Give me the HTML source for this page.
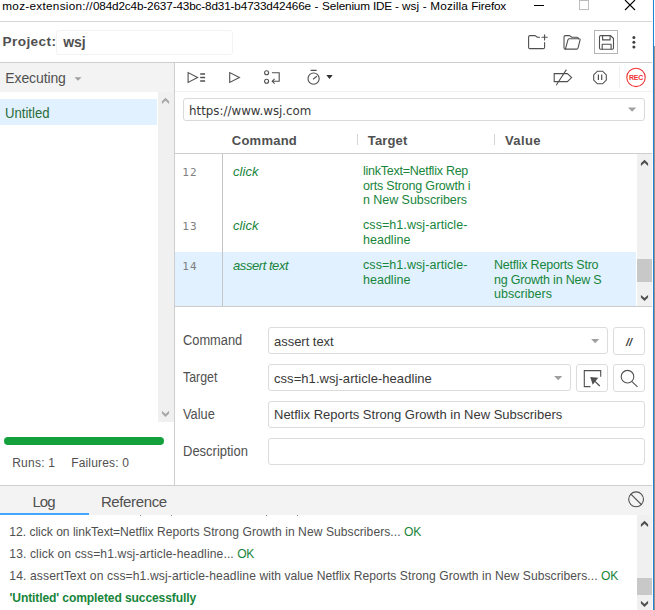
<!DOCTYPE html>
<html lang="en">
<head>
<meta charset="utf-8">
<title>Selenium IDE - wsj</title>
<style>
*{box-sizing:border-box;margin:0;padding:0}
html,body{width:655px;height:610px;overflow:hidden;background:#fff}
body{position:relative;font-family:"Liberation Sans",Arial,sans-serif;color:#505050;font-size:13px}
.a{position:absolute}
.t{position:absolute;white-space:pre}
.box{position:absolute;border:1px solid #dcdcdc;border-radius:3px;background:#fff}
svg.ic{position:absolute;overflow:visible;pointer-events:none}
</style>
</head>
<body>
<div class="t" style="left:2.3px;top:-2px;font-size:11.75px;line-height:16px;color:#000;"><span style="letter-spacing:0.275px">moz-extension://</span><span style="letter-spacing:-0.149px">084d2c4b-2637-43bc-8d31-b4733d42466e</span><span style="letter-spacing:0.216px"> - </span><span style="letter-spacing:-0.15px">Selenium </span><span style="letter-spacing:-0.189px">IDE - </span><span style="letter-spacing:0.163px">wsj - </span><span style="letter-spacing:0.145px">Mozilla </span><span style="letter-spacing:-0.167px">Firefox</span></div>
<svg class="ic" width="655" height="610" viewBox="0 0 655 610" style="left:0;top:0;"><path d="M534 5.5H544" stroke="#000" stroke-width="1" fill="none"/><rect x="579.5" y="0.5" width="9" height="9" stroke="#bcbcbc" stroke-width="1" fill="none"/><path d="M625 0L635 10M635 0L625 10" stroke="#000" stroke-width="1.1" fill="none"/></svg>
<div class="a" style="left:0px;top:21px;width:652px;height:1px;background:#d8d8d8;"></div>
<div class="t" style="left:2.5px;top:34px;font-size:13.6px;line-height:16px;font-weight:bold;letter-spacing:0.414px;">Project:</div>
<div class="box" style="left:56px;top:30px;width:177px;height:25px;border-color:#f3f3f3;"></div>
<div class="t" style="left:63.2px;top:34px;font-size:14px;line-height:16px;font-weight:bold;">wsj</div>
<div class="a" style="left:0px;top:62px;width:652px;height:1px;background:#cecece;"></div>
<svg class="ic" width="655" height="610" viewBox="0 0 655 610" style="left:0;top:0;"><g fill="none" stroke="#505050" stroke-width="1.1" stroke-linejoin="round" stroke-linecap="round"><path d="M539.6 37.3H537.4L535.2 35.6H530Q528.6 35.6 528.6 37V47.2Q528.6 48.6 530 48.6H543.2Q544.6 48.6 544.6 47.2V42.6"/><path d="M542 37.3H547.2M544.6 34.7V39.9"/><path d="M565.4 49.1Q564 49.1 564 47.7V37Q564 35.6 565.4 35.6H569.6L571.8 37.3H577Q578.4 37.3 578.4 38.7"/><path d="M565.4 49.1L568 39.6Q568.3 38.7 569.3 38.7H579Q580.4 38.7 580.1 39.9L578 48.1Q577.7 49.1 576.7 49.1Z"/><path d="M600.7 35.6H610.6L613.5 38.5V48Q613.5 49.2 612.3 49.2H600.7Q599.5 49.2 599.5 48V36.8Q599.5 35.6 600.7 35.6Z"/><path d="M602.6 35.8V39.9H610.1V35.8"/><path d="M602.2 49V44.3H611.1V49"/></g><rect x="594.5" y="30.5" width="23" height="23" fill="none" stroke="#b4b4b4" stroke-width="1"/><circle cx="633.9" cy="37.5" r="1.5" fill="#404040"/><circle cx="633.9" cy="42.2" r="1.5" fill="#404040"/><circle cx="633.9" cy="46.9" r="1.5" fill="#404040"/></svg>
<div class="a" style="left:0px;top:63px;width:174px;height:29px;background:#f3f3f3;"></div>
<div class="t" style="left:5.3px;top:70px;font-size:14px;line-height:16px;letter-spacing:-0.112px;">Executing</div>
<svg class="ic" width="655" height="610" viewBox="0 0 655 610" style="left:0;top:0;"><path d="M74.5 77.3H81.5L78 80.8Z" fill="#a0a0a0"/></svg>
<div class="a" style="left:0px;top:99px;width:157px;height:26px;background:#e1f1ff;"></div>
<div class="t" style="left:5.16px;top:105px;font-size:14px;line-height:16px;transform:scaleX(0.937);transform-origin:0 0;color:#2a6b3a;">Untitled</div>
<div class="a" style="left:158px;top:92px;width:16px;height:330px;background:#f0f0f0;"></div>
<svg class="ic" width="655" height="610" viewBox="0 0 655 610" style="left:0;top:0;"><path d="M165.5 97.8L169.1 101.3V104.0L165.5 100.8L161.9 104.0V101.3Z" fill="#a8a8a8"/><path d="M165.5 417L169.1 413.5V410.8L165.5 414L161.9 410.8V413.5Z" fill="#a8a8a8"/></svg>
<div class="a" style="left:174px;top:63px;width:1px;height:423px;background:#cecece;"></div>
<div class="a" style="left:4px;top:437px;width:160px;height:8px;background:#14a03c;border-radius:4px;"></div>
<div class="t" style="left:12.2px;top:455px;font-size:12px;line-height:16px;letter-spacing:0.25px;">Runs: 1</div>
<div class="t" style="left:71.2px;top:455px;font-size:12px;line-height:16px;letter-spacing:0.17px;">Failures: 0</div>
<div class="a" style="left:175px;top:91px;width:477px;height:1px;background:#f0f0f0;"></div>
<div class="a" style="left:619px;top:66px;width:1px;height:22px;background:#eeeeee;"></div>
<svg class="ic" width="655" height="610" viewBox="0 0 655 610" style="left:0;top:0;"><g fill="none" stroke="#505050" stroke-width="1.1" stroke-linejoin="miter"><path d="M188.1 72.6V82.4L197.6 77.5Z"/><path d="M229.7 72.6V82.4L239.4 77.5Z"/></g><path d="M200.2 74.1H205.1M200.2 77.5H205.1M200.2 80.9H205.1" stroke="#505050" stroke-width="1.5" fill="none"/><g fill="none" stroke="#505050" stroke-width="1.1"><circle cx="266.6" cy="72.7" r="2"/><circle cx="266.6" cy="81.3" r="2"/><path d="M271.9 72.7H279.2V81.3H272.3M274.6 78.9L272.2 81.3L274.6 83.7"/><circle cx="313.6" cy="78.6" r="5.6"/><path d="M310.6 70.4H316.6M313 79.2L316.9 76.3"/><path d="M554.2 73.6H567.4L571.6 77.6L567.4 81.6H554.2ZM566.4 69.6L556.2 85.2"/><path d="M597.4 71.2H602.6L606.3 74.9V80.1L602.6 83.8H597.4L593.7 80.1V74.9Z"/><path d="M598.4 74.6V80M601.7 74.6V80" stroke-width="1.2"/></g><path d="M326.3 74.9H332.7L329.5 79.1Z" fill="#303030"/><circle cx="636" cy="77.4" r="9.2" fill="none" stroke="#f03232" stroke-width="1.1"/></svg>
<div class="t" style="left:628px;top:73px;width:16px;text-align:center;font-size:7px;line-height:10px;font-weight:bold;color:#f03232;letter-spacing:-0.2px">REC</div>
<div class="box" style="left:183px;top:98px;width:462px;height:23px;border-color:#dadada;"></div>
<div class="t" style="left:189.33px;top:103px;font-size:12.2px;line-height:16px;transform:scaleX(0.9718);transform-origin:0 0;color:#383838;font-family:'DejaVu Sans','Liberation Sans',sans-serif;">https://www.wsj.com</div>
<svg class="ic" width="655" height="610" viewBox="0 0 655 610" style="left:0;top:0;"><path d="M628 107.4H636.2L632.1 111.8Z" fill="#a0a0a0"/></svg>
<div class="t" style="left:231.8px;top:133px;font-size:13px;line-height:16px;font-weight:bold;letter-spacing:0.233px;">Command</div>
<div class="t" style="left:367.8px;top:133px;font-size:13px;line-height:16px;font-weight:bold;letter-spacing:0.14px;">Target</div>
<div class="t" style="left:505px;top:133px;font-size:13px;line-height:16px;font-weight:bold;letter-spacing:0.4px;">Value</div>
<div class="a" style="left:357px;top:134px;width:1px;height:11px;background:#d4d4d4;"></div>
<div class="a" style="left:494px;top:134px;width:1px;height:11px;background:#d4d4d4;"></div>
<div class="a" style="left:175px;top:153px;width:477px;height:1px;background:#cecece;"></div>
<div class="a" style="left:175px;top:252px;width:461px;height:54px;background:#e1f1ff;"></div>
<div class="a" style="left:175px;top:306px;width:477px;height:1px;background:#cccccc;"></div>
<div class="a" style="left:222px;top:154px;width:1px;height:152px;background:#c4c4c4;"></div>
<div class="a" style="left:637px;top:154px;width:15px;height:152px;background:#f0f0f0;"></div>
<div class="a" style="left:637px;top:259px;width:15px;height:23px;background:#c8c8c8;"></div>
<svg class="ic" width="655" height="610" viewBox="0 0 655 610" style="left:0;top:0;"><path d="M644.5 159.8L648.1 163.3V166.0L644.5 162.8L640.9 166.0V163.3Z" fill="#505050"/><path d="M644.5 301.1L648.1 297.6V294.90000000000003L644.5 298.1L640.9 294.90000000000003V297.6Z" fill="#505050"/></svg>
<div class="t" style="left:182.2px;top:165px;font-size:11px;line-height:16px;color:#808080;font-family:'DejaVu Sans Mono','Liberation Mono',monospace;letter-spacing:1.1px;">12</div>
<div class="t" style="left:182.2px;top:219px;font-size:11px;line-height:16px;color:#808080;font-family:'DejaVu Sans Mono','Liberation Mono',monospace;letter-spacing:1.1px;">13</div>
<div class="t" style="left:182.2px;top:259px;font-size:11px;line-height:16px;color:#808080;font-family:'DejaVu Sans Mono','Liberation Mono',monospace;letter-spacing:1.1px;">14</div>
<div class="t" style="left:233.1px;top:164px;font-size:13px;line-height:16px;color:#17853a;font-style:italic;letter-spacing:0.025px;">click</div>
<div class="t" style="left:233.1px;top:218px;font-size:13px;line-height:16px;color:#17853a;font-style:italic;letter-spacing:0.025px;">click</div>
<div class="t" style="left:233.1px;top:258px;font-size:13px;line-height:16px;color:#17853a;font-style:italic;letter-spacing:-0.45px;">assert text</div>
<div class="t" style="left:363px;top:163px;font-size:12.5px;line-height:16px;color:#17853a;letter-spacing:-0.253px;">linkText=Netflix Rep</div>
<div class="t" style="left:363px;top:178px;font-size:12.5px;line-height:16px;color:#17853a;letter-spacing:-0.189px;">orts Strong Growth i</div>
<div class="t" style="left:363px;top:192px;font-size:12.5px;line-height:16px;color:#17853a;letter-spacing:-0.05px;">n New Subscribers</div>
<div class="t" style="left:363px;top:217px;font-size:12.5px;line-height:16px;color:#17853a;letter-spacing:0.067px;">css=h1.wsj-article-</div>
<div class="t" style="left:363px;top:232px;font-size:12.5px;line-height:16px;color:#17853a;letter-spacing:0.014px;">headline</div>
<div class="t" style="left:363px;top:257px;font-size:12.5px;line-height:16px;color:#17853a;letter-spacing:0.067px;">css=h1.wsj-article-</div>
<div class="t" style="left:363px;top:272px;font-size:12.5px;line-height:16px;color:#17853a;letter-spacing:0.014px;">headline</div>
<div class="t" style="left:494px;top:257px;font-size:12.5px;line-height:16px;color:#17853a;letter-spacing:-0.2px;">Netflix Reports Stro</div>
<div class="t" style="left:494px;top:272px;font-size:12.5px;line-height:16px;color:#17853a;letter-spacing:-0.206px;">ng Growth in New S</div>
<div class="t" style="left:494px;top:286px;font-size:12.5px;line-height:16px;color:#17853a;letter-spacing:0.033px;">ubscribers</div>
<div class="t" style="left:183.0px;top:332px;font-size:14px;line-height:16px;transform:scaleX(0.9172);transform-origin:0 0;">Command</div>
<div class="t" style="left:183.4px;top:369px;font-size:14px;line-height:16px;transform:scaleX(0.8821);transform-origin:0 0;">Target</div>
<div class="t" style="left:183.4px;top:406px;font-size:14px;line-height:16px;transform:scaleX(0.9143);transform-origin:0 0;">Value</div>
<div class="t" style="left:183.27px;top:443px;font-size:14px;line-height:16px;transform:scaleX(0.9275);transform-origin:0 0;">Description</div>
<div class="box" style="left:268px;top:327px;width:340px;height:27px;border-color:#dcdcdc;"></div>
<div class="box" style="left:613px;top:327px;width:32px;height:28px;border-color:#dcdcdc;"></div>
<div class="box" style="left:268px;top:364px;width:303px;height:27px;border-color:#dcdcdc;"></div>
<div class="box" style="left:576px;top:364px;width:32px;height:28px;border-color:#dcdcdc;"></div>
<div class="box" style="left:613px;top:364px;width:32px;height:28px;border-color:#dcdcdc;"></div>
<div class="box" style="left:268px;top:401px;width:377px;height:27px;border-color:#dcdcdc;"></div>
<div class="box" style="left:268px;top:438px;width:377px;height:27px;border-color:#dcdcdc;"></div>
<div class="t" style="left:274px;top:334px;font-size:13px;line-height:16px;color:#383838;letter-spacing:-0.03px;">assert text</div>
<div class="t" style="left:274px;top:371px;font-size:13px;line-height:16px;color:#383838;letter-spacing:0.054px;">css=h1.wsj-article-headline</div>
<div class="t" style="left:274px;top:407px;font-size:13px;line-height:16px;color:#383838;">Netflix Reports Strong Growth in New Subscribers</div>
<svg class="ic" width="655" height="610" viewBox="0 0 655 610" style="left:0;top:0;"><path d="M591.1 338.9H599.3L595.2 343.3Z" fill="#a0a0a0"/><path d="M554.1 375.9H562.3L558.2 380.3Z" fill="#a0a0a0"/></svg>
<div class="t" style="left:626px;top:334px;font-size:11px;line-height:16px;font-weight:bold;font-style:italic;color:#404040">//</div>
<svg class="ic" width="655" height="610" viewBox="0 0 655 610" style="left:0;top:0;"><g fill="none" stroke="#505050" stroke-width="1.1"><path d="M600.7 376.8V370.6H584.3V386.6H590.4"/><circle cx="627.5" cy="376.7" r="6.3"/><path d="M632 381.6L637.5 386.8"/><path d="M595 381.4L599.8 386" stroke-width="1.3"/></g><path d="M590.2 376.9L598.3 377.8L592.7 384.8Z" fill="#505050"/></svg>
<div class="a" style="left:0px;top:485px;width:652px;height:1px;background:#cecece;"></div>
<div class="a" style="left:0px;top:486px;width:652px;height:29px;background:#f3f3f3;"></div>
<div class="a" style="left:0px;top:513px;width:89px;height:2px;background:#40a6ff;"></div>
<div class="t" style="left:32.4px;top:494px;font-size:15px;line-height:16px;letter-spacing:-0.9px;">Log</div>
<div class="t" style="left:100.9px;top:494px;font-size:15px;line-height:16px;letter-spacing:-0.375px;">Reference</div>
<svg class="ic" width="655" height="610" viewBox="0 0 655 610" style="left:0;top:0;"><g fill="none" stroke="#505050" stroke-width="1.1"><circle cx="636.1" cy="499.3" r="7.4"/><path d="M630.9 494.1L641.3 504.5"/></g></svg>
<div class="a" style="left:637px;top:515px;width:15px;height:95px;background:#f0f0f0;"></div>
<div class="a" style="left:637px;top:578px;width:15px;height:17px;background:#c8c8c8;"></div>
<svg class="ic" width="655" height="610" viewBox="0 0 655 610" style="left:0;top:0;"><path d="M644.5 520.8L648.1 524.3V527.0L644.5 523.8L640.9 527.0V524.3Z" fill="#505050"/><path d="M644.5 607L648.1 603.5V600.8L644.5 604L640.9 600.8V603.5Z" fill="#505050"/></svg>
<div class="t" style="left:9.3px;top:524px;font-size:12.1px;line-height:16px;"><span style="letter-spacing:-0.021px">12. click on linkText=Netflix </span><span style="letter-spacing:0.057px">Reports Strong Growth in New Subscribers... </span><span style="letter-spacing:-0.1px;color:#17853a">OK</span></div>
<div class="t" style="left:9.3px;top:546px;font-size:12.1px;line-height:16px;"><span style="letter-spacing:0.118px">13. click on css=h1.wsj-article-headline... </span><span style="letter-spacing:-0.6px;color:#17853a">OK</span></div>
<div class="t" style="left:9.3px;top:568px;font-size:12.1px;line-height:16px;"><span style="letter-spacing:0.127px">14. assertText on css=h1.wsj-article-headline </span><span style="letter-spacing:0.005px">with value Netflix </span><span style="letter-spacing:0.06px">Reports Strong Growth in New Subscribers... </span><span style="letter-spacing:-0.1px;color:#17853a">OK</span></div>
<div class="t" style="left:9.6px;top:590px;font-size:12.1px;line-height:16px;color:#17853a;font-weight:bold;letter-spacing:-0.125px;">'Untitled' completed successfully</div>
<div class="a" style="left:140px;top:515px;width:1px;height:1px;background:#8a8a8a;"></div>
<div class="a" style="left:171px;top:515px;width:1px;height:1px;background:#8a8a8a;"></div>
<div class="a" style="left:266px;top:515px;width:1px;height:1px;background:#8a8a8a;"></div>
<div class="a" style="left:297px;top:515px;width:1px;height:1px;background:#8a8a8a;"></div>
<div class="a" style="left:652px;top:0px;width:1px;height:610px;background:#fdfaf7;"></div>
<div class="a" style="left:653px;top:0px;width:1px;height:610px;background:#2080d8;"></div>
<div class="a" style="left:654px;top:0px;width:1px;height:46px;background:#ffffff;"></div>
<div class="a" style="left:654px;top:46px;width:1px;height:564px;background:#9a9088;"></div>
</body>
</html>
